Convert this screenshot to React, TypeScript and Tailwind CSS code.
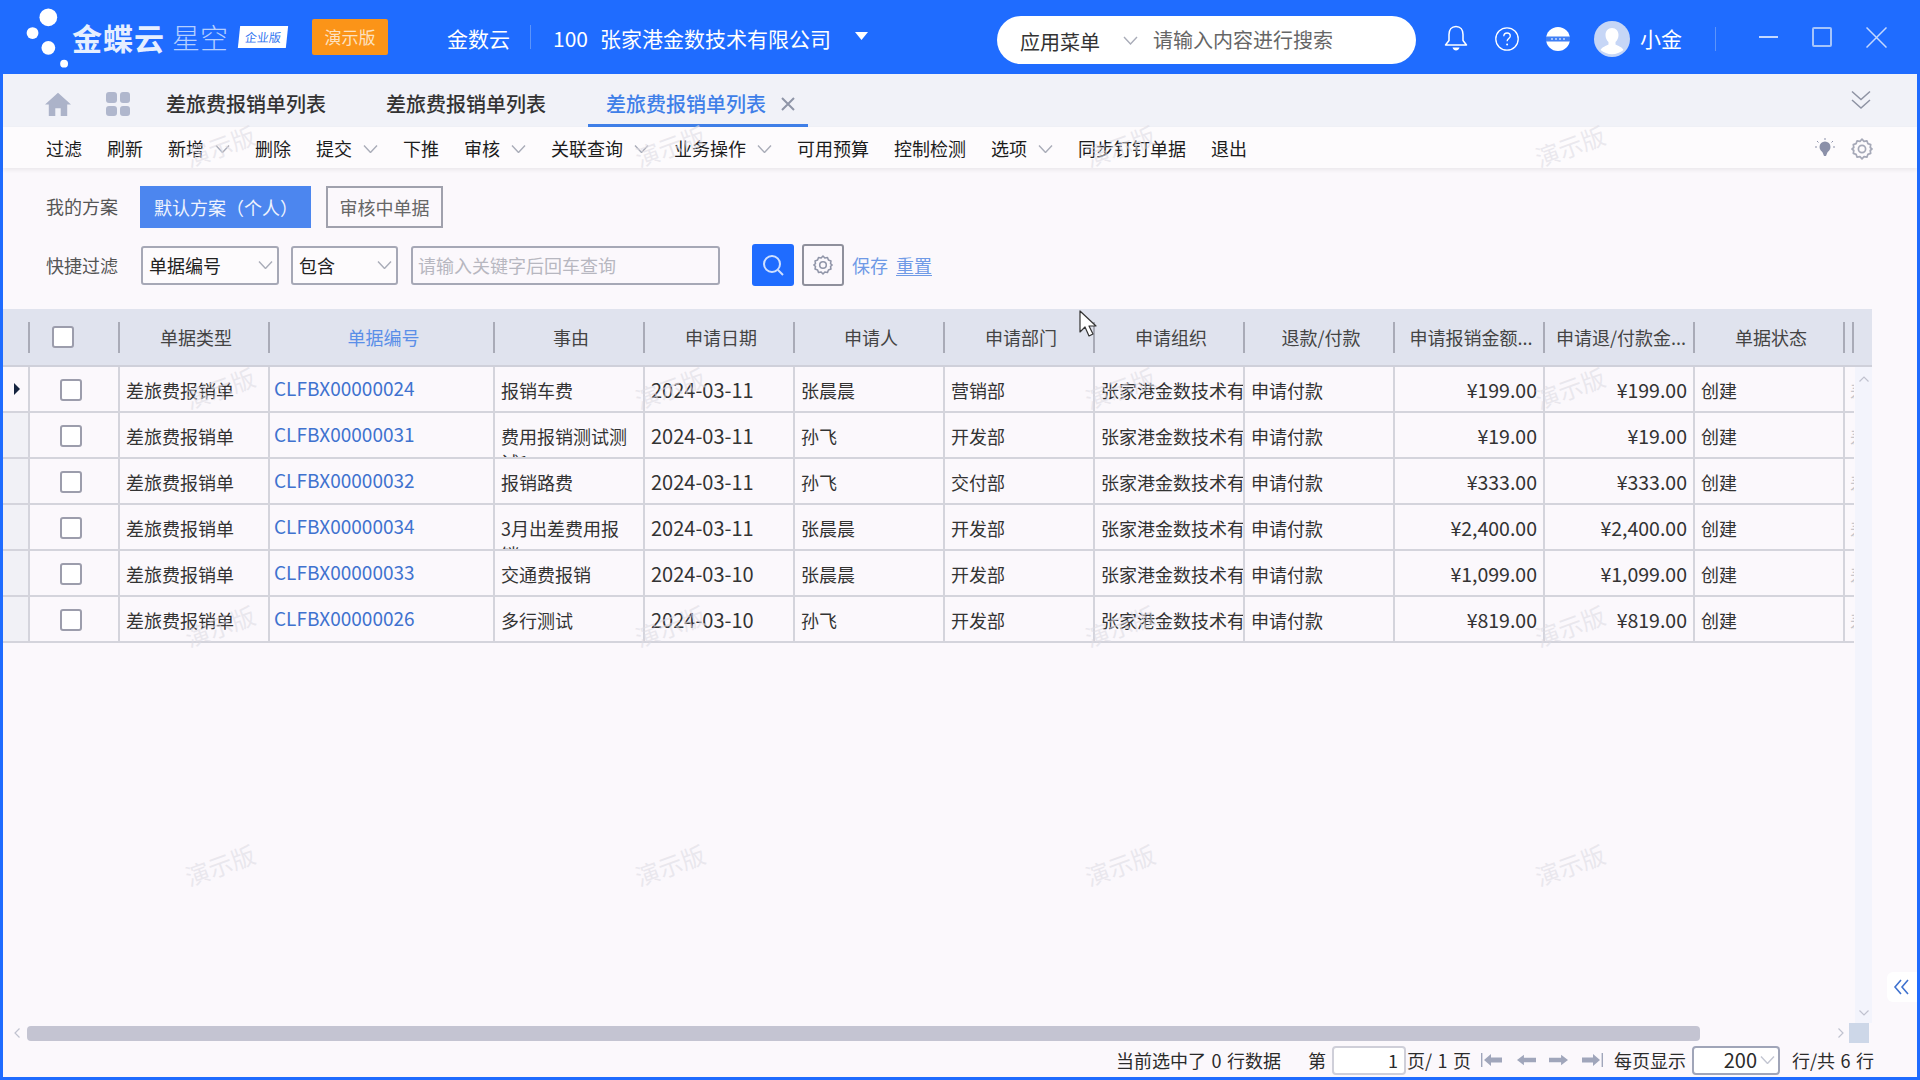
type Row = {
  no: string;
  reason: string;
  date: string;
  person: string;
  dept: string;
  amount: string;
};

const rows: Row[] = [
  { no: 'CLFBX00000024', reason: '报销车费', date: '2024-03-11', person: '张晨晨', dept: '营销部', amount: '¥199.00' },
  { no: 'CLFBX00000031', reason: '费用报销测试测试1', date: '2024-03-11', person: '孙飞', dept: '开发部', amount: '¥19.00' },
  { no: 'CLFBX00000032', reason: '报销路费', date: '2024-03-11', person: '孙飞', dept: '交付部', amount: '¥333.00' },
  { no: 'CLFBX00000034', reason: '3月出差费用报销', date: '2024-03-11', person: '张晨晨', dept: '开发部', amount: '¥2,400.00' },
  { no: 'CLFBX00000033', reason: '交通费报销', date: '2024-03-10', person: '张晨晨', dept: '开发部', amount: '¥1,099.00' },
  { no: 'CLFBX00000026', reason: '多行测试', date: '2024-03-10', person: '孙飞', dept: '开发部', amount: '¥819.00' },
];

const toolbar: { label: string; menu?: boolean }[] = [
  { label: '过滤' },
  { label: '刷新' },
  { label: '新增', menu: true },
  { label: '删除' },
  { label: '提交', menu: true },
  { label: '下推' },
  { label: '审核', menu: true },
  { label: '关联查询', menu: true },
  { label: '业务操作', menu: true },
  { label: '可用预算' },
  { label: '控制检测' },
  { label: '选项', menu: true },
  { label: '同步钉钉单据' },
  { label: '退出' },
];

const headers = ['单据类型', '单据编号', '事由', '申请日期', '申请人', '申请部门', '申请组织', '退款/付款', '申请报销金额...', '申请退/付款金...', '单据状态'];

const gridCols = 'grid grid-cols-[27px_90px_150px_225px_150px_150px_150px_150px_150px_150px_150px_150px_150px_9px]';

const marks = [
  [220, 146], [670, 146], [1120, 146], [1570, 146],
  [220, 388], [670, 388], [1120, 388], [1570, 388],
  [220, 626], [670, 626], [1120, 626], [1570, 626],
  [220, 865], [670, 865], [1120, 865], [1570, 865],
];

const Chevron = ({ className = 'w-[15px] h-[8px] text-[#a9acb8]' }: { className?: string }) => (
  <svg viewBox="0 0 15 8" fill="none" stroke="currentColor" strokeWidth="1.4" className={className}>
    <path d="M1 .5 7.5 7.5 14 .5" />
  </svg>
);

const Gear = ({ className, stroke = '#9095a8' }: { className: string; stroke?: string }) => (
  <svg viewBox="0 0 24 24" fill="none" stroke={stroke} strokeWidth="1.7" className={className}>
    <path d="M12 2.2 14 4.3l2.9-.5 1 2.8 2.8 1-.5 2.9L22 12l-1.8 1.5.5 2.9-2.8 1-1 2.8-2.9-.5-2 2.1-2-2.1-2.9.5-1-2.8-2.8-1 .5-2.9L2 12l1.8-1.5-.5-2.9 2.8-1 1-2.8 2.9.5z" strokeLinejoin="round" />
    <circle cx="12" cy="12" r="3.6" />
  </svg>
);

const Arrow = ({ dir, bar }: { dir: 'left' | 'right'; bar?: boolean }) => (
  <svg viewBox="0 0 22 14" className={bar ? 'w-[22px] h-[14px]' : 'w-[19px] h-[14px]'} fill="#a0a6bb">
    {dir === 'left' ? (
      <>
        {bar && <rect x="0" y="0" width="1.4" height="14" />}
        <path d={bar ? 'M3 7 10 1v3.500h11v5H10V13z' : 'M0 7 8 1v3.500h14v5H8V13z'} />
      </>
    ) : (
      <>
        <path d={bar ? 'M19 7 12 1v3.500H1v5h11V13z' : 'M22 7 14 1v3.500H0v5h14V13z'} />
        {bar && <rect x="20.6" y="0" width="1.4" height="14" />}
      </>
    )}
  </svg>
);

const Checkbox = () => <span className="block w-[22px] h-[22px] rounded-[3px] border-2 border-[#9c9dac] bg-white" />;

const Select = ({ label, width }: { label: string; width: string }) => (
  <div className={`${width} h-[39px] flex items-center justify-between pl-[6px] pr-[4px] border-2 border-[#a6a8b6] rounded-[3px] bg-[#fdfbfd] text-[18px] text-[#222]`}>
    <span>{label}</span>
    <Chevron />
  </div>
);

const cell = 'h-full border-r-2 border-[#d4d4dc] overflow-hidden';
const textCell = `${cell} pl-[6px] pt-[10px] leading-[26px]`;
const moneyCell = `${cell} pr-[6px] pt-[10px] leading-[26px] text-right text-[19.5px]`;

export default function App() {
  return (
    <div className="relative w-[1920px] h-[1080px] overflow-hidden flex flex-col bg-[#1f6cff] font-['Noto_Sans_CJK_SC','Noto_Sans',sans-serif]">
      <header className="h-[74px] shrink-0 flex items-center text-white">
        <svg viewBox="0 0 73 74" className="w-[72px] h-[74px] shrink-0" fill="#fff">
          <circle cx="49" cy="17" r="9" />
          <circle cx="33" cy="33" r="6" />
          <circle cx="49" cy="48" r="7" />
          <circle cx="65" cy="64" r="4" />
        </svg>
        <span className="text-[30px] font-bold tracking-[1px] leading-none shrink-0 text-[#e6efff]">金蝶云</span>
        <span className="ml-[7px] text-[28px] font-light text-[#b4cfff] leading-none shrink-0">星空</span>
        <span className="ml-[11px] w-[48px] h-[22px] -skew-x-6 bg-white text-[#2f74f0] text-[12px] leading-[22px] text-center shrink-0">企业版</span>
        <span className="ml-[25px] w-[76px] h-[36px] rounded-[2px] bg-[#fb9418] text-[#fde2c2] text-[17px] leading-[36px] text-center shrink-0">演示版</span>
        <span className="ml-[59px] mt-[3px] text-[21px] shrink-0">金数云</span>
        <span className="ml-[20px] w-px h-[24px] bg-[#5c94fa] shrink-0" />
        <span className="ml-[22px] mt-[3px] w-[35px] text-[21px] shrink-0">100</span>
        <span className="ml-[12px] mt-[3px] w-[231px] text-[21px] shrink-0">张家港金数技术有限公司</span>
        <svg viewBox="0 0 13 8" className="ml-[24px] w-[13px] h-[8px] mb-[3px] shrink-0" fill="#fff">
          <path d="M0 0h13L6.500 8z" />
        </svg>
        <div className="ml-[129px] w-[419px] h-[48px] rounded-full bg-white flex items-center pl-[23px] shrink-0 mb-[-6px]">
          <span className="w-[81px] text-[20px] leading-none text-[#333] mt-[3px]">应用菜单</span>
          <Chevron className="ml-[22px] w-[15px] h-[9px] text-[#a9acb8]" />
          <span className="ml-[15px] text-[20px] leading-none text-[#666]">请输入内容进行搜索</span>
        </div>
        <svg viewBox="0 0 24 26" className="ml-[28px] w-[24px] h-[26px] shrink-0 mt-[2px]" fill="none" stroke="#fff" strokeWidth="1.5">
          <path d="M12 1.500c-4.500 0-7 3.500-7 8v6l-3.500 4.500h21L19 15.500v-6c0-4.500-2.500-8-7-8z" strokeLinejoin="round" />
          <path d="M8.500 22.500h7c-.5 2-2 3-3.500 3s-3-1-3.500-3z" fill="#fff" stroke="none" />
        </svg>
        <svg viewBox="0 0 24 24" className="ml-[27px] w-[24px] h-[24px] shrink-0 mt-[4px]" fill="none" stroke="#fff" strokeWidth="1.3">
          <circle cx="12" cy="12" r="11.200" />
          <path d="M8.800 9.300c0-2 1.500-3.300 3.300-3.300s3.200 1.200 3.200 2.900c0 2.500-3.200 2.700-3.200 5.300" />
          <circle cx="12.100" cy="17.500" r="1" fill="#fff" stroke="none" />
        </svg>
        <svg viewBox="0 0 24 24" className="ml-[27px] w-[24px] h-[24px] shrink-0 mt-[4px]">
          <circle cx="12" cy="12" r="12" fill="#fff" />
          <rect x="0" y="9.500" width="24" height="5" fill="#3f7ff5" />
          <circle cx="6" cy="12" r=".9" fill="#cfe0ff" />
          <circle cx="10" cy="12" r=".9" fill="#cfe0ff" />
          <circle cx="14" cy="12" r=".9" fill="#cfe0ff" />
          <circle cx="18" cy="12" r=".9" fill="#cfe0ff" />
        </svg>
        <svg viewBox="0 0 36 36" className="ml-[24px] w-[36px] h-[36px] shrink-0 mt-[4px]">
          <circle cx="18" cy="18" r="18" fill="#c6d6f6" />
          <path d="M18 7c-4 0-6.500 3-6.500 7 0 3 1.300 5.500 3 7v2.500c-2.500 1.500-6.500 2.500-8 5.500a18 18 0 0 0 23 0c-1.500-3-5.500-4-8-5.500V21c1.700-1.500 3-4 3-7 0-4-2.500-7-6.500-7z" fill="#fff" />
        </svg>
        <span className="ml-[10px] w-[42px] text-[21px] shrink-0 mt-[3px]">小金</span>
        <span className="ml-[33px] w-px h-[24px] bg-[#5c94fa] shrink-0 mt-[4px]" />
        <span className="ml-[43px] w-[19px] h-[2px] bg-[#c4d8ff] shrink-0" />
        <span className="ml-[34px] w-[20px] h-[20px] rounded-[2px] border-2 border-[#a5c4fb] shrink-0" />
        <svg viewBox="0 0 21 21" className="ml-[34px] w-[21px] h-[21px] shrink-0" stroke="#c4d8ff" strokeWidth="1.5">
          <path d="M.5.5l20 20M20.500.5l-20 20" />
        </svg>
      </header>

      <div className="relative flex-1 min-h-0 ml-[3px] mr-[3px] mb-[3px] flex flex-col bg-[#fbf8fc]">
        <div className="h-[53px] shrink-0 flex items-end bg-[#f1f2f8]">
          <svg viewBox="0 0 24 24" className="ml-[42px] mb-[10px] w-[26px] h-[26px]" fill="#acb3c9">
            <path d="M12 1.500 0 12.500h3.500V23h6v-7h5v7h6V12.500H24z" />
          </svg>
          <span className="ml-[35px] mb-[11px] w-[24px] h-[24px] grid grid-cols-2 gap-[3px]">
            <i className="rounded-[3px] bg-[#b0b7cd]" />
            <i className="rounded-[3px] bg-[#b0b7cd]" />
            <i className="rounded-[3px] bg-[#b0b7cd]" />
            <i className="rounded-[3px] bg-[#b0b7cd]" />
          </span>
          <span className="ml-[18px] w-[220px] h-[53px] pl-[18px] pt-[7px] flex items-center text-[20px] font-medium text-[#333]">差旅费报销单列表</span>
          <span className="w-[220px] h-[53px] pl-[18px] pt-[7px] flex items-center text-[20px] font-medium text-[#333]">差旅费报销单列表</span>
          <span className="w-[220px] h-[53px] pl-[18px] pt-[10px] border-b-[3px] border-[#3f7fe8] flex items-center text-[20px] font-medium text-[#3f7fe8]">
            差旅费报销单列表
            <svg viewBox="0 0 14 14" className="ml-[15px] w-[14px] h-[14px]" stroke="#8f95a8" strokeWidth="2">
              <path d="M1 1l12 12M13 1 1 13" />
            </svg>
          </span>
          <svg viewBox="0 0 20 20" className="ml-[1043px] mb-[17px] w-[20px] h-[20px]" fill="none" stroke="#8e93a3" strokeWidth="1.5">
            <path d="M1 1.500l9 8 9-8M1 10l9 8 9-8" />
          </svg>
        </div>

        <div className="relative h-[41px] shrink-0 flex items-center gap-[25px] pl-[43px] bg-[#fdfbfd] shadow-[0_2px_4px_rgba(0,0,0,0.07)] text-[18px] text-[#1c1c1c]">
          {toolbar.map(item => (
            <span key={item.label} className="flex items-center mt-[2px]">
              {item.label}
              {item.menu && <Chevron className="ml-[11px] w-[15px] h-[8px] text-[#a9acb8]" />}
            </span>
          ))}
          <svg viewBox="0 0 20 22" className="ml-auto mt-[2px] w-[20px] h-[22px]" fill="#8b90a9">
            <circle cx="10" cy="9" r="5.500" />
            <path d="M7 13h6l-2 5H9z" />
            <path d="M10 0v2M2 3l1.500 1.500M18 3l-1.500 1.500M0 9h2M18 9h2" stroke="#8b90a9" strokeWidth="1" />
          </svg>
          <Gear className="mr-[43px] -ml-[10px] mt-[2px] w-[24px] h-[24px]" stroke="#a6a9b8" />
        </div>

        <div className="shrink-0 mt-[18px] pl-[43px] flex items-center h-[42px] text-[18px]">
          <span className="w-[72px] text-[#555] mb-[2px]">我的方案</span>
          <span className="ml-[22px] w-[171px] h-[42px] pl-[14px] leading-[42px] bg-[#4c86ef] text-[#eef3fe]">默认方案（个人）</span>
          <span className="ml-[15px] w-[117px] h-[42px] leading-[38px] text-center border-2 border-[#a0a1ad] text-[#666]">审核中单据</span>
        </div>

        <div className="shrink-0 mt-[16px] pl-[43px] flex items-center h-[42px] text-[18px]">
          <span className="w-[72px] text-[#555]">快捷过滤</span>
          <Select label="单据编号" width="ml-[23px] w-[138px]" />
          <Select label="包含" width="ml-[12px] w-[107px]" />
          <div className="ml-[13px] w-[309px] h-[39px] pl-[5px] leading-[35px] border-2 border-[#a6a8b6] rounded-[3px] text-[#b7b7c0]">请输入关键字后回车查询</div>
          <span className="ml-[32px] w-[42px] h-[42px] rounded-[3px] bg-[#1f6cff] flex items-center justify-center">
            <svg viewBox="0 0 24 24" className="w-[24px] h-[24px]" fill="none" stroke="#cfe0ff" strokeWidth="2">
              <circle cx="11" cy="11" r="8" />
              <path d="m17 17 5 5" />
            </svg>
          </span>
          <span className="ml-[8px] w-[42px] h-[42px] rounded-[3px] border-2 border-[#8f909c] flex items-center justify-center">
            <Gear className="w-[22px] h-[22px]" />
          </span>
          <span className="ml-[8px] text-[#6f9ae6]">保存</span>
          <span className="ml-[8px] text-[#6f9ae6] underline underline-offset-2 decoration-1">重置</span>
        </div>

        <div className="mt-[23px] flex-1 min-h-0 w-[1869px] flex flex-col">
          <div className={`${gridCols} h-[58px] shrink-0 w-[1869px] bg-[#e0e3ee] border-b-2 border-[#cfd0da] text-[18px] text-[#444]`}>
            <span className="flex items-center justify-end">
              <i className="w-[2px] h-[31px] bg-[#a9abb7]" />
            </span>
            <span className="flex items-center">
              <span className="flex-1 flex justify-center pr-[22px]">
                <Checkbox />
              </span>
              <i className="w-[2px] h-[31px] bg-[#a9abb7]" />
            </span>
            {headers.map((h, i) => (
              <span key={h} className="flex items-center whitespace-nowrap">
                <span className={i === 1 ? 'flex-1 pl-[4px] text-center text-[#5b8fe8]' : 'flex-1 pl-[4px] text-center'}>{h}</span>
                <i className="w-[2px] h-[31px] bg-[#a9abb7]" />
              </span>
            ))}
            <span className="flex items-center justify-end">
              <i className="w-[2px] h-[31px] bg-[#a9abb7]" />
            </span>
          </div>

          <div className="flex-1 min-h-0 flex">
            <div className="w-[1851px] shrink-0">
              {rows.map((row, i) => (
                <div key={row.no} className={`${gridCols} h-[46px] border-b-2 border-[#d4d4dc] text-[18px] text-[#333]`}>
                  <span className={`${cell} flex items-center pl-[11px] ${i === 0 ? 'bg-[#fbf8fc]' : 'bg-[#f1f1f6]'}`}>
                    {i === 0 && (
                      <svg viewBox="0 0 6 12" className="w-[6px] h-[12px]" fill="#14233f">
                        <path d="M0 0l6 6-6 6z" />
                      </svg>
                    )}
                  </span>
                  <span className={`${cell} flex items-center justify-center pr-[6px] pt-[1px]`}>
                    <Checkbox />
                  </span>
                  <span className={textCell}>差旅费报销单</span>
                  <span className={`${cell} pl-[4px] leading-[42px] text-[19px] text-[#3f72cf]`}>{row.no}</span>
                  <span className={`${textCell} pr-[8px]`}>{row.reason}</span>
                  <span className={`${textCell} text-[20px]`}>{row.date}</span>
                  <span className={textCell}>{row.person}</span>
                  <span className={textCell}>{row.dept}</span>
                  <span className={`${textCell} whitespace-nowrap`}>张家港金数技术有限公司</span>
                  <span className={textCell}>申请付款</span>
                  <span className={moneyCell}>{row.amount}</span>
                  <span className={moneyCell}>{row.amount}</span>
                  <span className={textCell}>创建</span>
                  <span className="h-full overflow-hidden pl-[5px] pt-[10px] leading-[26px] text-[#c6c6cc]">差</span>
                </div>
              ))}
            </div>
            <div className="ml-[1px] w-[17px] h-full flex flex-col items-center justify-between bg-[#f3f4fc] pt-[9px] pb-[7px]">
              <svg viewBox="0 0 10 6" className="w-[10px] h-[6px]" fill="none" stroke="#c0c2cf" strokeWidth="1.2">
                <path d="M.5 5.500 5 1l4.500 4.500" />
              </svg>
              <svg viewBox="0 0 10 6" className="w-[10px] h-[6px]" fill="none" stroke="#c0c2cf" strokeWidth="1.2">
                <path d="M.5.5 5 5l4.500-4.500" />
              </svg>
            </div>
          </div>

          <div className="h-[20px] shrink-0 flex items-center">
            <svg viewBox="0 0 6 10" className="ml-[11px] w-[6px] h-[10px]" fill="none" stroke="#c0c2cf" strokeWidth="1.2">
              <path d="M5.500.5 1 5l4.500 4.500" />
            </svg>
            <span className="ml-[7px] w-[1673px] h-[15px] rounded-[4px] bg-[#c4c4d2]" />
            <svg viewBox="0 0 6 10" className="ml-[138px] w-[6px] h-[10px]" fill="none" stroke="#c0c2cf" strokeWidth="1.2">
              <path d="M.5.5 5 5 .5 9.500" />
            </svg>
            <span className="ml-[5px] w-[20px] h-[20px] bg-[#cdd7e8]" />
          </div>
        </div>

        <div className="h-[34px] shrink-0 flex items-center pl-[1113px] text-[18px] text-[#2b2b2b] whitespace-nowrap [word-spacing:1.5px]">
          <span className="w-[165px]">当前选中了 0 行数据</span>
          <span className="ml-[27px] w-[18px]">第</span>
          <span className="ml-[6px] w-[74px] h-[29px] pr-[6px] leading-[25px] text-right border-2 border-[#cfcfd9] rounded-[4px] bg-white">1</span>
          <span className="w-[65px] pl-[1px]">页/ 1 页</span>
          <span className="ml-[10px] flex items-center">
            <Arrow dir="left" bar />
            <span className="ml-[14px]"><Arrow dir="left" /></span>
            <span className="ml-[13px]"><Arrow dir="right" /></span>
            <span className="ml-[13px]"><Arrow dir="right" bar /></span>
          </span>
          <span className="ml-[11px] w-[72px]">每页显示</span>
          <span className="ml-[6px] w-[88px] h-[29px] flex items-center justify-end pr-[3px] border-2 border-[#a0a5b8] rounded-[4px] bg-white text-[20px]">
            200
            <Chevron className="ml-[3px] w-[15px] h-[8px] text-[#c3c6d2]" />
          </span>
          <span className="ml-[12px]">行/共 6 行</span>
        </div>

        <div className="absolute right-0 top-[898px] w-[30px] h-[30px] rounded-l-[6px] bg-white flex items-center justify-center">
          <svg viewBox="0 0 18 18" className="w-[18px] h-[18px]" fill="none" stroke="#3f72cf" strokeWidth="1.6">
            <path d="M8 2 2 9l6 7M15 2 9 9l6 7" />
          </svg>
        </div>
      </div>

      {marks.map(([x, y]) => (
        <span
          key={`${x}-${y}`}
          className="absolute -translate-x-1/2 -translate-y-1/2 -rotate-20 text-[24px] leading-none text-[#dedce4]/60 pointer-events-none"
          style={{ left: x, top: y }}
        >
          演示版
        </span>
      ))}

      <svg viewBox="0 0 19 28" className="absolute left-[1079px] top-[310px] w-[19px] h-[28px]" fill="#fff" stroke="#333" strokeWidth="1.2">
        <path d="M1 1v21l5-5 4 9 4-2-4-8h7z" strokeLinejoin="round" />
      </svg>
    </div>
  );
}
